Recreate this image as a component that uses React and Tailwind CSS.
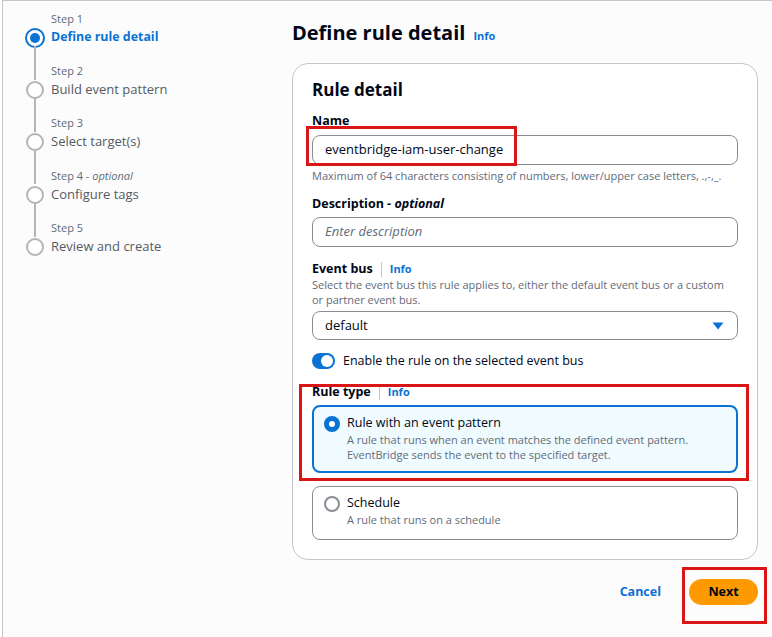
import React from 'react';

const steps = [
  { label: 'Step 1', title: 'Define rule detail', active: true },
  { label: 'Step 2', title: 'Build event pattern' },
  { label: 'Step 3', title: 'Select target(s)' },
  { label: 'Step 4', optional: true, title: 'Configure tags' },
  { label: 'Step 5', title: 'Review and create' },
];

function Stepper() {
  return (
    <nav className="w-[240px] pt-[10px] pl-[22px]">
      {steps.map((s, i) => (
        <div key={i} className="relative flex h-[52.2px]">
          {i < steps.length - 1 && (
            <div className="absolute left-[9px] top-[35px] h-[34px] w-[2px] bg-[#b4b4bb]" />
          )}
          <div className="w-[26px] pt-[17px]">
            {s.active ? (
              <div className="flex h-[20px] w-[20px] items-center justify-center rounded-full border-[2px] border-[#0972d3]">
                <div className="h-[10px] w-[10px] rounded-full bg-[#0972d3]" />
              </div>
            ) : (
              <div className="ml-[1px] mt-[1px] h-[18px] w-[18px] rounded-full border-[2px] border-[#b4b4bb] bg-white" />
            )}
          </div>
          <div>
            <div className="text-[11px] leading-[16px] text-[#5f6b7a]">
              {s.label}
              {s.optional && <> - <i>optional</i></>}
            </div>
            <div
              className={
                s.active
                  ? 'text-[12.4px] font-bold leading-[20px] text-[#0972d3]'
                  : 'text-[13px] leading-[20px] text-[#545b64]'
              }
            >
              {s.title}
            </div>
          </div>
        </div>
      ))}
    </nav>
  );
}

function InfoLink({ divider }) {
  return (
    <span className="flex items-center">
      {divider && <span className="mx-[8px] h-[15px] w-px bg-[#c6c6cd]" />}
      <span className="text-[11px] font-bold text-[#0972d3]">Info</span>
    </span>
  );
}

function Radio({ checked }) {
  return checked ? (
    <div className="flex h-[16px] w-[16px] items-center justify-center rounded-full bg-[#0972d3]">
      <div className="h-[6px] w-[6px] rounded-full bg-white" />
    </div>
  ) : (
    <div className="h-[16px] w-[16px] rounded-full border-[2px] border-[#8c8c94] bg-white" />
  );
}

export default function App() {
  return (
    <div
      className="ml-[2px] flex h-[637px] w-[770px] border-l border-t border-[#c6c6cd] bg-[#fcfcfc] text-[#000716]"
      style={{ fontFamily: '"Open Sans", "Noto Sans", sans-serif' }}
    >
      <Stepper />

      <main className="w-[515px] pl-[49px]">
        <div className="mt-[18px] flex items-baseline gap-[8px]">
          <h1 className="text-[20px] font-bold leading-[28px]">Define rule detail</h1>
          <InfoLink />
        </div>

        <section className="mt-[16px] h-[497px] w-[466px] rounded-[16px] border border-[#c6c6cd] bg-white px-[19px] pt-[14px]">
          <h2 className="text-[17px] font-bold leading-[24px]">Rule detail</h2>

          <div className="mt-[10px]">
            <div className="text-[12.5px] font-bold leading-[18px]">Name</div>
            <div className="relative mt-[5px]">
              <div className="flex h-[30px] items-center rounded-[8px] border border-[#8c8c94] px-[12px] text-[13px]">
                eventbridge-iam-user-change
              </div>
              <div className="absolute left-[-6px] top-[-9px] h-[40px] w-[211px] border-[3px] border-[#d91515]" />
            </div>
            <div className="mt-[3px] text-[11px] leading-[16px] text-[#5f6b7a]">
              Maximum of 64 characters consisting of numbers, lower/upper case letters, .,-,_.
            </div>
          </div>

          <div className="mt-[11px]">
            <div className="text-[12.5px] font-bold leading-[18px]">
              Description - <i>optional</i>
            </div>
            <div className="mt-[4px] flex h-[30px] items-center rounded-[8px] border border-[#8c8c94] px-[12px] text-[13px] italic text-[#5f6b7a]">
              Enter description
            </div>
          </div>

          <div className="mt-[13px]">
            <div className="flex items-center">
              <span className="text-[12.5px] font-bold leading-[18px]">Event bus</span>
              <InfoLink divider />
            </div>
            <div className="-mt-[1px] pr-[12px] text-[11px] leading-[15px] text-[#5f6b7a]">
              Select the event bus this rule applies to, either the default event bus or a custom or partner event bus.
            </div>
            <div className="mt-[4px] flex h-[29px] items-center justify-between rounded-[8px] border border-[#8c8c94] pl-[12px] pr-[13px] text-[13px]">
              default
              <svg width="12" height="8" viewBox="0 0 12 8">
                <path d="M0.5 0.5h11L6 7.5z" fill="#0972d3" />
              </svg>
            </div>
          </div>

          <div className="mt-[12px] flex items-center gap-[8px]">
            <div className="flex h-[16px] w-[23px] items-center justify-end rounded-full bg-[#0972d3] pr-[2px]">
              <div className="h-[12px] w-[12px] rounded-full bg-white" />
            </div>
            <span className="text-[12.5px] leading-[18px]">Enable the rule on the selected event bus</span>
          </div>

          <div className="relative mt-[13px]">
            <div className="absolute left-[-13px] top-[1px] h-[97px] w-[450px] border-[3px] border-[#d91515]" />
            <div className="flex items-center">
              <span className="text-[12.5px] font-bold leading-[18px]">Rule type</span>
              <InfoLink divider />
            </div>
            <div className="mt-[4px] flex h-[68px] gap-[7px] rounded-[8px] border-[2px] border-[#0972d3] bg-[#f0fbff] pl-[10px] pt-[7px]">
              <div className="pt-[2px]">
                <Radio checked />
              </div>
              <div>
                <div className="text-[12.5px] leading-[18px]">Rule with an event pattern</div>
                <div className="text-[11px] leading-[15px] text-[#5f6b7a]">
                  A rule that runs when an event matches the defined event pattern.
                  <br />
                  EventBridge sends the event to the specified target.
                </div>
              </div>
            </div>
            <div className="mt-[13px] flex h-[54px] gap-[7px] rounded-[8px] border border-[#8c8c94] pl-[11px] pt-[7px]">
              <div className="pt-[2px]">
                <Radio />
              </div>
              <div>
                <div className="text-[12.5px] leading-[18px]">Schedule</div>
                <div className="text-[11px] leading-[15px] text-[#5f6b7a]">A rule that runs on a schedule</div>
              </div>
            </div>
          </div>
        </section>

        <div className="mt-[19px] flex items-center justify-end">
          <span className="mr-[28px] text-[12.5px] font-bold text-[#0972d3]">Cancel</span>
          <div className="relative">
            <div className="absolute left-[-7px] top-[-12px] h-[57px] w-[85px] border-[3px] border-[#d91515]" />
            <div className="flex h-[26px] w-[69px] items-center justify-center rounded-full bg-[#ff9900] text-[12.5px] font-bold">
              Next
            </div>
          </div>
        </div>
      </main>
    </div>
  );
}
